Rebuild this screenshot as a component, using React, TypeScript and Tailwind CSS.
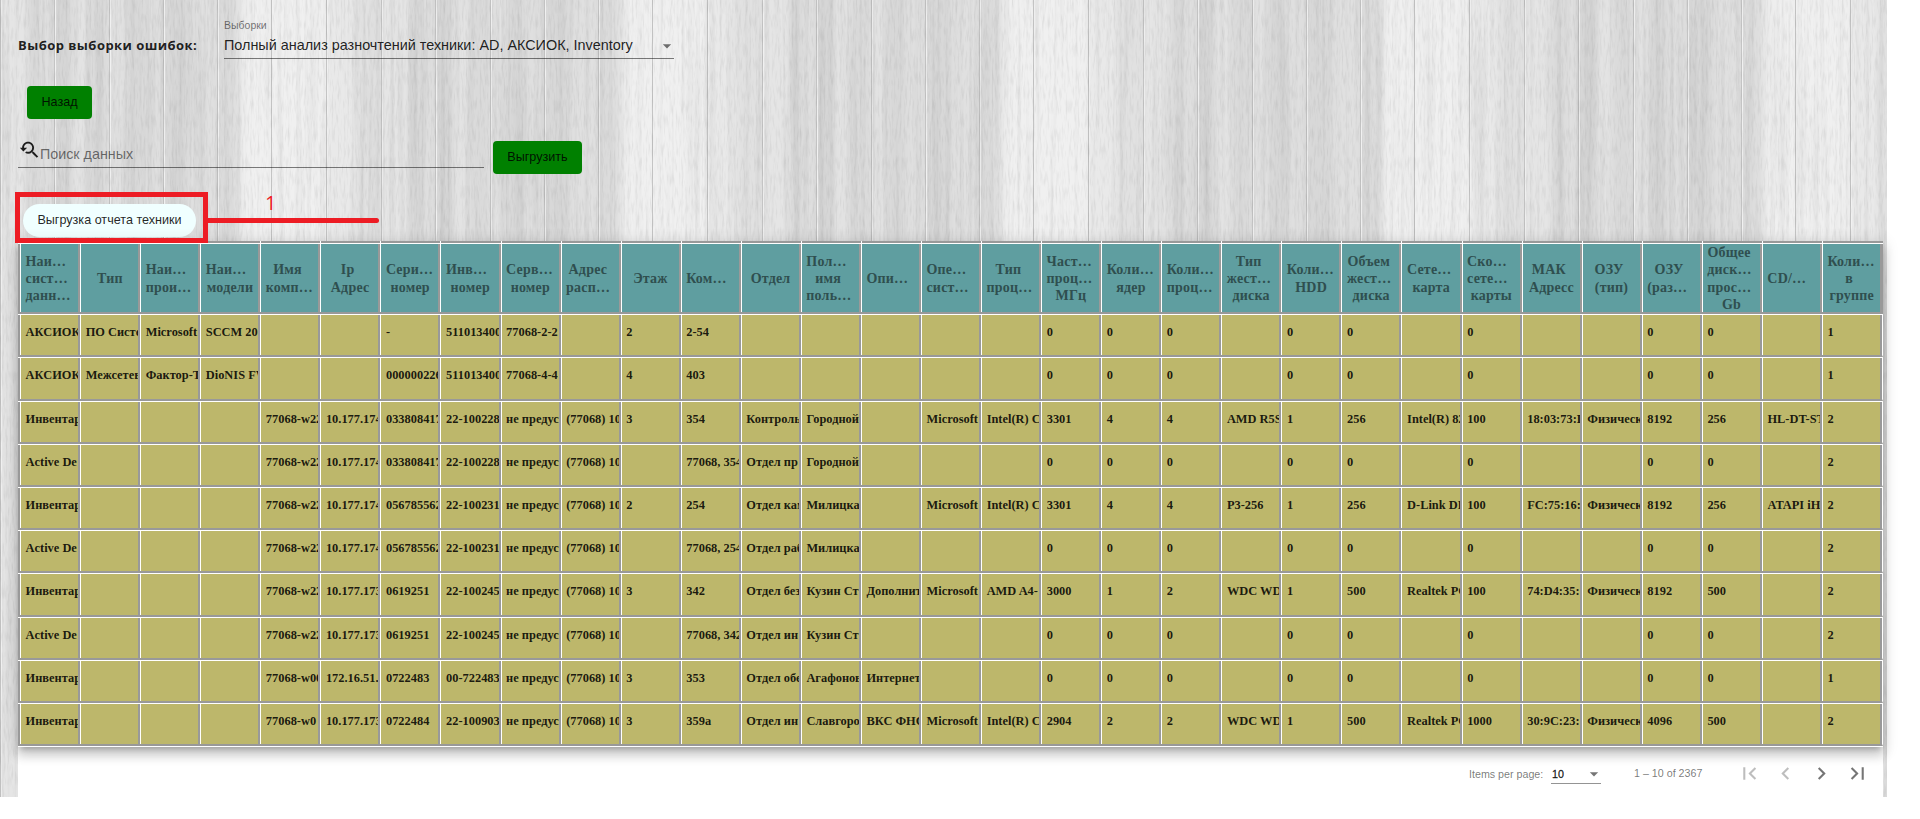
import React from "react";
import {
  MdArrowDropDown,
  MdChevronLeft,
  MdChevronRight,
  MdFirstPage,
  MdLastPage,
  MdYoutubeSearchedFor,
} from "react-icons/md";

const headers: string[] = [
  "Наи…|сист…|данн…", "Тип", "Наи…|прои…", "Наи…|модели", "Имя|комп…", "Ip|Адрес",
  "Сери…|номер", "Инв…|номер", "Серв…|номер", "Адрес|расп…", "Этаж", "Ком…", "Отдел",
  "Пол…|имя|поль…", "Опи…", "Опе…|сист…", "Тип|проц…", "Част…|проц…|МГц", "Коли…|ядер",
  "Коли…|проц…", "Тип|жест…|диска", "Коли…|HDD", "Объем|жест…|диска", "Сете…|карта",
  "Ско…|сете…|карты", "МАК|Адресс", "ОЗУ|(тип)", "ОЗУ|(раз…", "Общее|диск…|прос…|Gb",
  "CD/…", "Коли…|в|группе",
];

const rows: string[] = [
  "АКСИОК|ПО Систе|Microsoft|SCCM 201|||-|511013400|77068-2-2||2|2-54||||||0|0|0||0|0||0|||0|0||1",
  "АКСИОК|Межсетев|Фактор-Т|DioNIS FW|||000000226|511013400|77068-4-4||4|403||||||0|0|0||0|0||0|||0|0||1",
  "Инвентар||||77068-w22|10.177.174|033808417|22-100228|не предус|(77068) 10|3|354|Контроль|Городной||Microsoft|Intel(R) C|3301|4|4|AMD R5S|1|256|Intel(R) 82|100|18:03:73:D|Физическ|8192|256|HL-DT-ST|2",
  "Active De||||77068-w22|10.177.174|033808417|22-100228|не предус|(77068) 10||77068, 354|Отдел пр|Городной||||0|0|0||0|0||0|||0|0||2",
  "Инвентар||||77068-w22|10.177.174|056785562|22-100231|не предус|(77068) 10|2|254|Отдел кам|Милицка||Microsoft|Intel(R) C|3301|4|4|P3-256|1|256|D-Link DF|100|FC:75:16:|Физическ|8192|256|ATAPI iH|2",
  "Active De||||77068-w22|10.177.174|056785562|22-100231|не предус|(77068) 10||77068, 254|Отдел раб|Милицка||||0|0|0||0|0||0|||0|0||2",
  "Инвентар||||77068-w22|10.177.173|0619251|22-100245|не предус|(77068) 10|3|342|Отдел без|Кузин Ст|Дополнит|Microsoft|AMD A4-|3000|1|2|WDC WD|1|500|Realtek PC|100|74:D4:35:|Физическ|8192|500||2",
  "Active De||||77068-w22|10.177.173|0619251|22-100245|не предус|(77068) 10||77068, 342|Отдел ин|Кузин Ст||||0|0|0||0|0||0|||0|0||2",
  "Инвентар||||77068-w00|172.16.51.|0722483|00-722483|не предус|(77068) 10|3|353|Отдел обе|Агафонов|Интернет|||0|0|0||0|0||0|||0|0||1",
  "Инвентар||||77068-w0|10.177.173|0722484|22-100903|не предус|(77068) 10|3|359а|Отдел ин|Славгоро|ВКС ФНС|Microsoft|Intel(R) C|2904|2|2|WDC WD|1|500|Realtek PC|1000|30:9C:23:|Физическ|4096|500||2",
];

const seams = [0, 54, 109, 163, 217, 271, 326];
const bands: [number, number, string][] = [
  [0, 28, "#e5e5e5"], [28, 12, "#d8d8d8"], [40, 14, "#dfdfdf"], [54, 18, "#d6d6d6"],
  [72, 16, "#e3e3e3"], [88, 22, "#dadada"], [109, 16, "#e2e2e2"], [125, 18, "#d8d8d8"],
  [143, 22, "#dfdfdf"], [163, 26, "#d8d8d8"], [189, 28, "#e0e0e0"], [217, 12, "#dadada"],
  [229, 12, "#dfdfdf"], [241, 88, "#f0f0f0"], [326, 28, "#e9e9e9"], [354, 27, "#e1e1e1"],
];

function WoodBackground() {
  return (
    <svg className="absolute left-0 top-0" width="1887" height="797" aria-hidden="true">
      <defs>
        <filter id="soft" x="0" y="0" width="1" height="1">
          <feGaussianBlur stdDeviation="3 0" />
        </filter>
        <filter id="grain" x="0" y="0" width="1" height="1">
          <feTurbulence type="fractalNoise" baseFrequency="0.2 0.004" numOctaves="3" seed="8" />
          <feColorMatrix values="0 0 0 0 0  0 0 0 0 0  0 0 0 0 0  1 0 0 0 -0.42" />
        </filter>
        <filter id="fine" x="0" y="0" width="1" height="1">
          <feTurbulence type="fractalNoise" baseFrequency="0.5 0.07" numOctaves="2" seed="3" />
          <feColorMatrix values="0 0 0 0 0  0 0 0 0 0  0 0 0 0 0  0.8 0 0 0 -0.36" />
        </filter>
        <pattern id="planks" width="381" height="797" patternUnits="userSpaceOnUse">
          <rect width="381" height="797" fill="#e0e0e0" />
          <g filter="url(#soft)">
            {bands.map(([x, w, fill]) => (
              <rect key={x} x={x} width={w} height="797" fill={fill} />
            ))}
          </g>
          {seams.map((x) => (
            <g key={x}>
              <rect x={x} width="1" height="797" fill="#c4c4c4" />
              <rect x={x + 1} width="1" height="797" fill="#f1f1f1" />
            </g>
          ))}
        </pattern>
      </defs>
      <rect width="1887" height="797" fill="url(#planks)" />
      <rect width="1887" height="797" filter="url(#grain)" opacity="0.12" />
      <rect width="1887" height="797" filter="url(#fine)" opacity="0.18" />
    </svg>
  );
}

function HeaderCell({ label }: { label: string }) {
  const lines = label.split("|");
  return (
    <div className="flex flex-col justify-center overflow-hidden border-l border-r-2 border-l-white border-r-[#999] bg-[#5f9ea0] pl-[4.5px] pr-[4px] pt-px">
      {lines.map((line, i) => {
        const align = line.endsWith("…")
          ? "text-left"
          : i < lines.length - 1
            ? "text-center pr-[5px]"
            : "text-center";
        return (
          <div key={i} className={`whitespace-nowrap ${align}`}>
            {line}
          </div>
        );
      })}
    </div>
  );
}

function DataTable() {
  return (
    <div className="w-[1865px] bg-[#999] font-['Liberation_Serif',serif] font-bold shadow-[0_5px_5px_-3px_rgba(0,0,0,.2),0_8px_10px_1px_rgba(0,0,0,.14),0_3px_14px_2px_rgba(0,0,0,.12)]">
      <div className="grid h-[2px] grid-cols-[repeat(31,minmax(0,1fr))] pl-[2px] pr-px">
        {headers.map((_, i) => (
          <div key={i} className={i > 3 ? "border-l border-white" : ""} />
        ))}
      </div>
      <div className="grid h-[71px] grid-cols-[repeat(31,minmax(0,1fr))] border-b-2 border-t border-b-[#999] border-t-white pl-[2px] pr-px text-[14px] leading-[17.2px] tracking-[0.2px] text-[#2f4f4f]">
        {headers.map((h, i) => (
          <HeaderCell key={i} label={h} />
        ))}
      </div>
      {rows.map((row, r) => (
        <div
          key={r}
          className={`grid grid-cols-[repeat(31,minmax(0,1fr))] border-b-2 border-r border-t border-b-[#999] border-r-white border-t-white pl-[2px] text-[12.4px] leading-[16px] text-black/87 ${r === 1 || r === 6 ? "h-[44px]" : "h-[43px]"}`}
        >
          {row.split("|").map((cell, c) => (
            <div
              key={c}
              className="overflow-hidden whitespace-nowrap border-l border-r-2 border-l-white border-r-[#999] bg-[#bdb76b] pl-[4.6px] pt-[8.5px]"
            >
              {cell}
            </div>
          ))}
        </div>
      ))}
      <div className="h-px bg-white" />
    </div>
  );
}

function Paginator() {
  return (
    <div className="flex h-[50px] w-[1865px] items-start bg-white pl-[1451px] pt-[17px] text-[10.7px] leading-[18px] text-black/54">
      <span className="w-[82px] whitespace-nowrap pt-px">Items per page:</span>
      <div className="flex h-[20px] w-[50px] items-center justify-between border-b border-black/42">
        <span className="pl-px font-medium text-black/87 [-webkit-text-stroke:0.3px_currentColor]">10</span>
        <MdArrowDropDown className="-mr-[3px] size-[20px]" />
      </div>
      <span className="ml-[33px] w-[101px] whitespace-nowrap">1 – 10 of 2367</span>
      <MdFirstPage className="-mt-[3px] ml-[2px] size-[25px] text-black/26" />
      <MdChevronLeft className="-mt-[3px] ml-[11px] size-[25px] text-black/26" />
      <MdChevronRight className="-mt-[3px] ml-[11px] size-[25px]" />
      <MdLastPage className="-mt-[3px] ml-[11px] size-[25px]" />
    </div>
  );
}

export default function App() {
  return (
    <div className="relative h-[819px] w-[1920px] overflow-hidden bg-white font-['Liberation_Sans',sans-serif] text-black/87">
      <WoodBackground />
      <div className="relative flex flex-col pl-[18px]">
        <div className="flex h-[86px]">
          <div className="w-[206px] whitespace-nowrap pt-[35px] font-['Open_Sans',sans-serif] text-[13px] font-bold leading-[20px] tracking-[0.45px]">
            Выбор выборки ошибок:
          </div>
          <div className="flex h-[59px] w-[450px] flex-col border-b border-black/50">
            <span className="mt-[18px] text-[10.5px] leading-[14px] text-black/54">Выборки</span>
            <div className="mt-[4px] flex h-[20px] items-center justify-between">
              <span className="whitespace-nowrap text-[14.4px]">
                Полный анализ разночтений техники: AD, АКСИОК, Inventory
              </span>
              <MdArrowDropDown className="-mr-[3px] size-[20px] text-black/54" />
            </div>
          </div>
        </div>
        <button className="ml-[9px] h-[33px] w-[65px] rounded-[4px] bg-[#008000] text-[12.6px]">
          Назад
        </button>
        <div className="flex h-[85px] pt-[22px]">
          <div className="flex h-[27px] w-[466px] border-b border-black/50">
            <MdYoutubeSearchedFor className="-mt-[2px] size-[22px]" />
            <span className="mt-[4px] whitespace-nowrap text-[14.3px] leading-[18px] text-black/54">
              Поиск данных
            </span>
          </div>
          <button className="ml-[9px] h-[33px] w-[89px] rounded-[4px] bg-[#008000] text-[12.6px]">
            Выгрузить
          </button>
        </div>
        <div className="h-[37px]">
          <button className="ml-[5px] h-[33px] w-[173px] whitespace-nowrap rounded-full bg-[#f0ffff] text-[12.6px]">
            Выгрузка отчета техники
          </button>
        </div>
        <div className="relative z-10">
          <DataTable />
        </div>
        <Paginator />
      </div>
      <div className="absolute left-[15px] top-[192px] z-20 h-[51px] w-[193px] border-[5px] border-[#ed1c24]" />
      <div className="absolute left-[206px] top-[218px] z-20 h-[5px] w-[173px] rounded-r-full bg-[#ed1c24]" />
      <span className="absolute left-[265px] top-[191px] z-20 font-['Open_Sans',sans-serif] text-[20px] leading-[24px] text-[#ed1c24]">
        1
      </span>
    </div>
  );
}
